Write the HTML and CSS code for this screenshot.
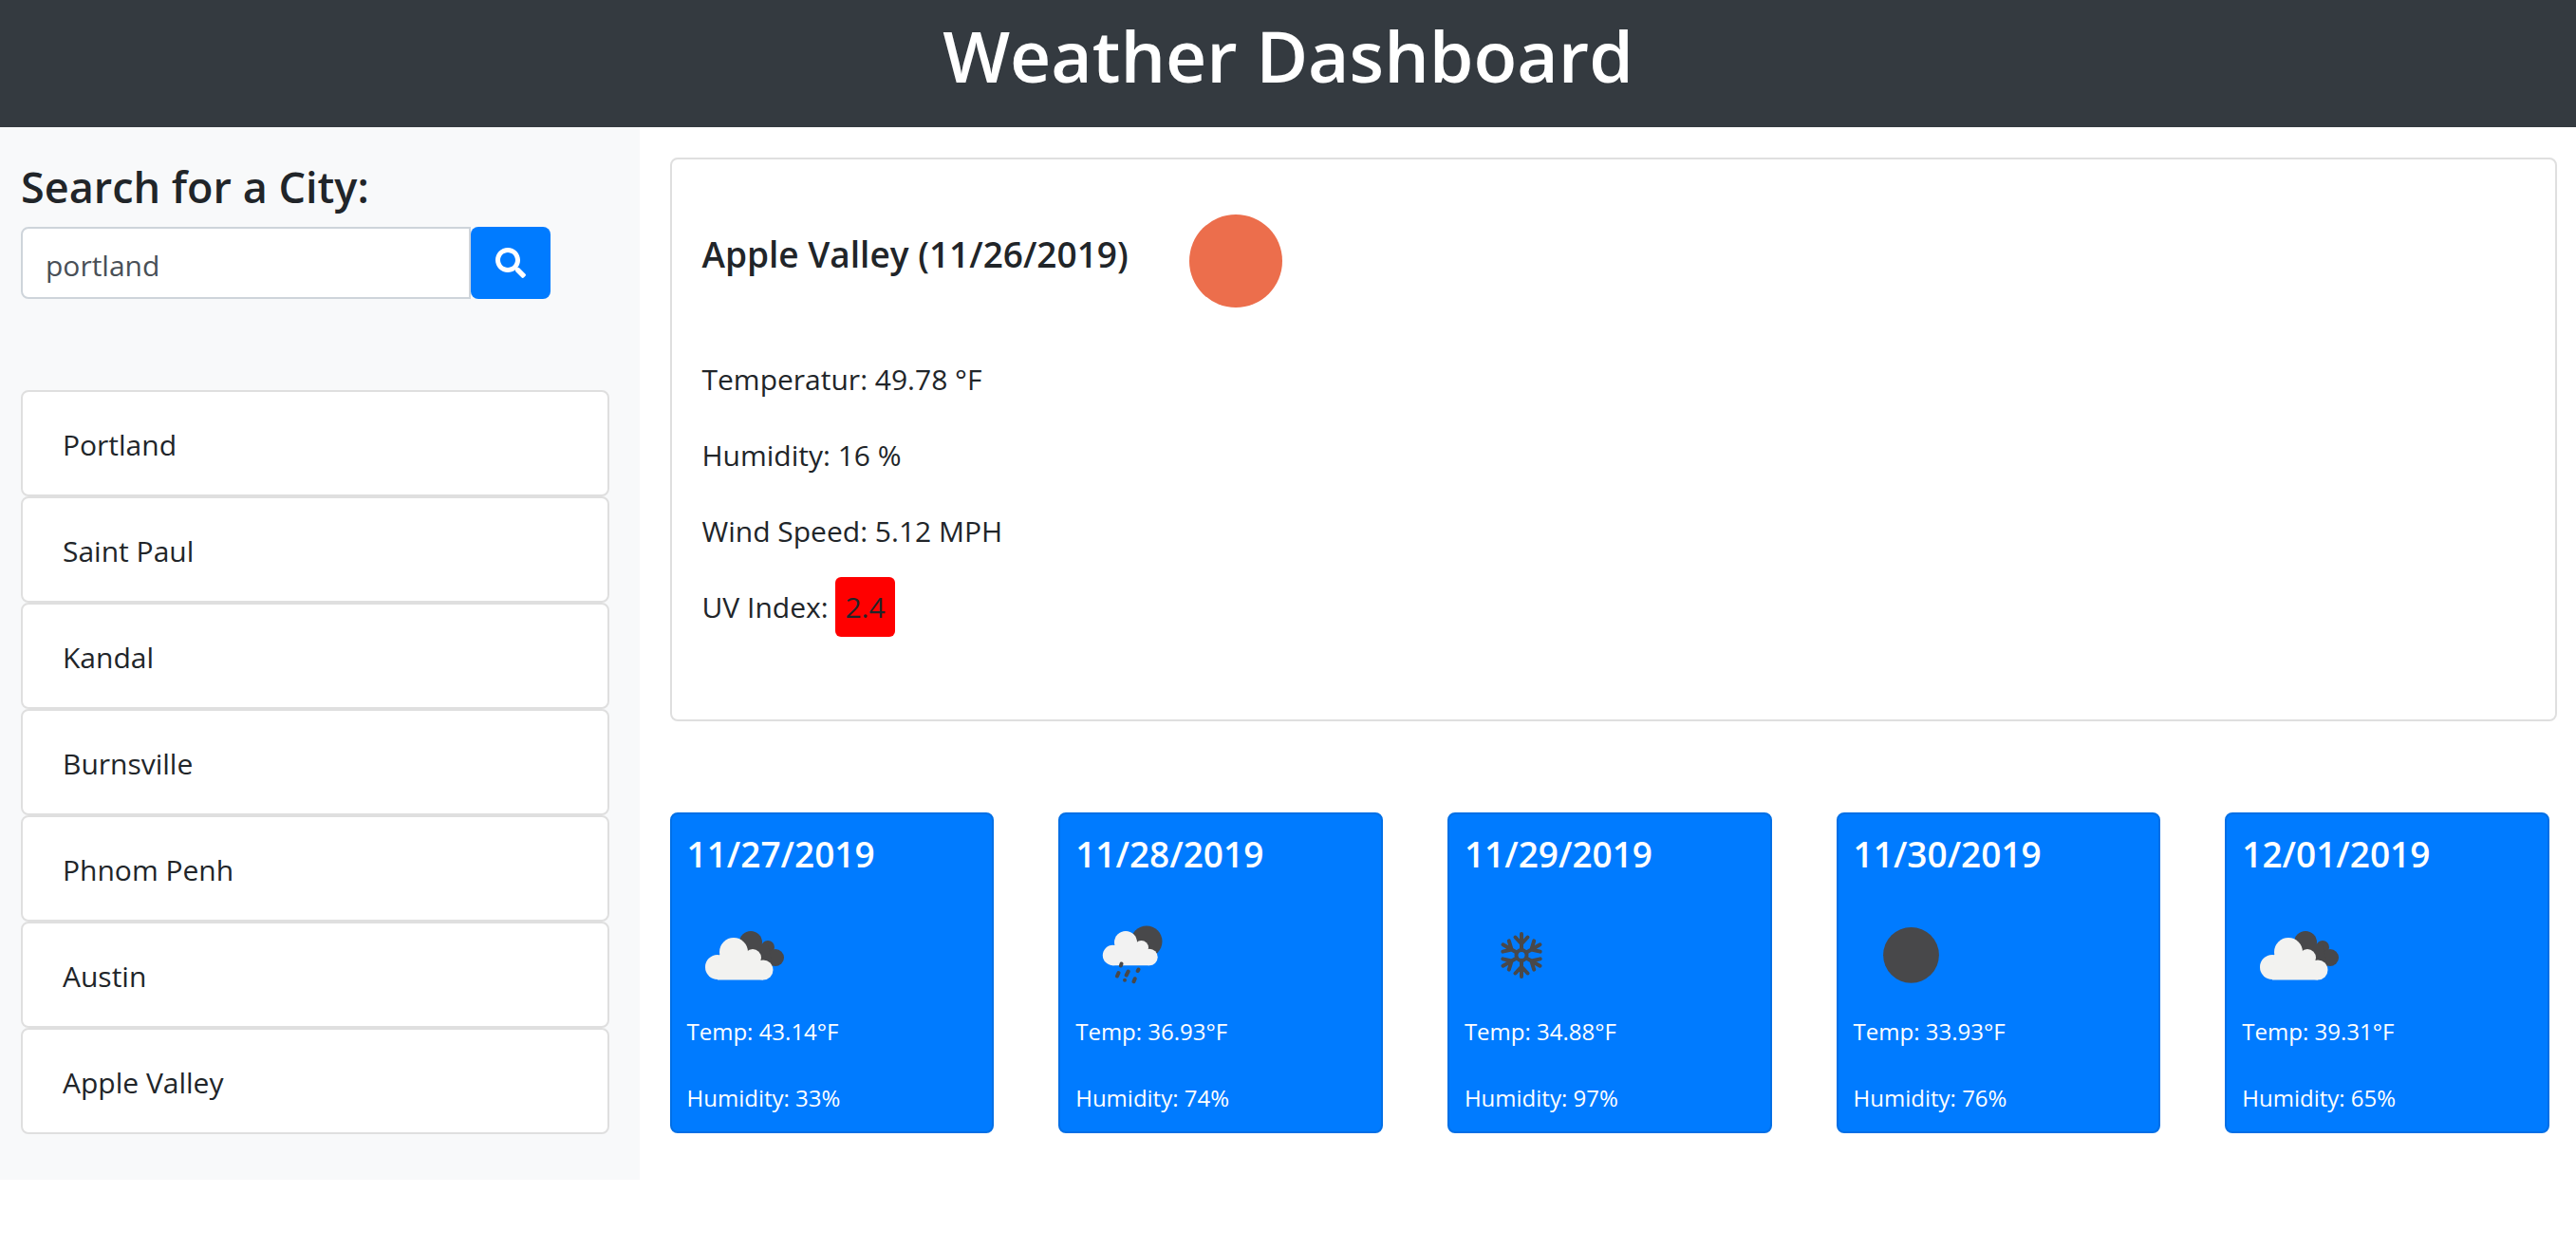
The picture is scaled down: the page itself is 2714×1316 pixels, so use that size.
FILE: index.html
```html
<!DOCTYPE html>
<html lang="en">
<head>
<meta charset="utf-8">
<meta name="viewport" content="width=device-width, initial-scale=1">
<title>Weather Dashboard</title>
<link rel="stylesheet" href="styles.css">
</head>
<body>
<header class="page-header">
  <h1 class="page-title">Weather Dashboard</h1>
</header>
<div class="layout">
  <aside class="sidebar">
    <form class="search">
      <label class="search-label" for="city">Search for a City:</label>
      <div class="search-row">
        <input class="search-input" id="city" type="text" value="portland">
        <button class="search-button" type="button" aria-label="Search">
          <svg class="search-icon" viewBox="0 0 512 512" aria-hidden="true"><path fill="currentColor" d="M505 442.7L405.3 343c-4.500-4.500-10.600-7-17-7H372c27.600-35.300 44-79.700 44-128C416 93.100 322.900 0 208 0S0 93.100 0 208s93.100 208 208 208c48.300 0 92.700-16.400 128-44v16.300c0 6.400 2.500 12.500 7 17l99.700 99.700c9.400 9.400 24.600 9.400 33.900 0l28.300-28.300c9.400-9.400 9.400-24.600.1-34zM208 336c-70.700 0-128-57.200-128-128 0-70.700 57.200-128 128-128 70.700 0 128 57.200 128 128 0 70.700-57.200 128-128 128z"/></svg>
        </button>
      </div>
    </form>
    <ul class="city-list">
      <li class="city">Portland</li>
      <li class="city">Saint Paul</li>
      <li class="city">Kandal</li>
      <li class="city">Burnsville</li>
      <li class="city">Phnom Penh</li>
      <li class="city">Austin</li>
      <li class="city">Apple Valley</li>
    </ul>
  </aside>
  <main class="content">
    <section class="current">
      <div class="current-head">
        <h2 class="current-title">Apple Valley (11/26/2019)</h2>
        <svg class="current-icon" viewBox="0 0 98 98" role="img" aria-label="Clear sky"><circle cx="49" cy="49" r="49" fill="#ec6e4c"/></svg>
      </div>
      <p class="reading">Temperatur: 49.78 °F</p>
      <p class="reading">Humidity: 16 %</p>
      <p class="reading">Wind Speed: 5.12 MPH</p>
      <p class="reading">UV Index: <span class="uv">2.4</span></p>
    </section>
    <section class="forecast">
      <article class="day">
        <h3 class="day-date">11/27/2019</h3>
        <svg class="day-icon" viewBox="0 0 110 100" role="img" aria-label="Broken clouds">
          <g fill="#48484a"><circle cx="67" cy="33" r="12"/><circle cx="85" cy="38" r="7"/><circle cx="93" cy="49" r="9"/><path d="M60 35L85 35L90 58H70z"/></g>
          <g fill="#f2f2f0"><circle cx="49" cy="43" r="15"/><circle cx="32" cy="59" r="13"/><circle cx="69" cy="49" r="9"/><circle cx="80" cy="62" r="10.500"/><path d="M34 46H74V54L80 60V72.500H32z"/></g>
        </svg>
        <p class="day-line">Temp: 43.14°F</p>
        <p class="day-line">Humidity: 33%</p>
      </article>
      <article class="day">
        <h3 class="day-date">11/28/2019</h3>
        <svg class="day-icon" viewBox="0 0 110 100" role="img" aria-label="Rain">
          <circle cx="75" cy="32" r="16.500" fill="#48484a"/>
          <g fill="#f2f2f2"><circle cx="53" cy="33" r="12"/><circle cx="39.500" cy="46.500" r="10.700"/><circle cx="69.500" cy="38.500" r="7.500"/><circle cx="78" cy="48.500" r="8.700"/><path d="M41 36H74V42L78 46V57.200H39z"/></g>
          <g stroke="#48484a" stroke-width="4" stroke-linecap="round"><path d="M48.500 55.500l-.6 2M45.500 65l-1.500 3.500M55.700 63.500l-2 4M66.500 61.500l-.8 1.500M52 72.700v.1M62.700 71.200l-1.200 3"/></g>
        </svg>
        <p class="day-line">Temp: 36.93°F</p>
        <p class="day-line">Humidity: 74%</p>
      </article>
      <article class="day">
        <h3 class="day-date">11/29/2019</h3>
        <svg class="day-icon" viewBox="0 0 110 100" role="img" aria-label="Snow">
          <defs><path id="arm" d="M0-6V-22.500M0-12L-6.500-19M0-12L6.500-19"/></defs>
          <g transform="translate(60 46.500)" fill="none" stroke="#48484a" stroke-width="4" stroke-linecap="round">
            <circle r="5.500"/>
            <use href="#arm"/><use href="#arm" transform="rotate(60)"/><use href="#arm" transform="rotate(120)"/><use href="#arm" transform="rotate(180)"/><use href="#arm" transform="rotate(240)"/><use href="#arm" transform="rotate(300)"/>
          </g>
        </svg>
        <p class="day-line">Temp: 34.88°F</p>
        <p class="day-line">Humidity: 97%</p>
      </article>
      <article class="day">
        <h3 class="day-date">11/30/2019</h3>
        <svg class="day-icon" viewBox="0 0 110 100" role="img" aria-label="Clear night"><circle cx="60.500" cy="46.300" r="29.400" fill="#48484a"/></svg>
        <p class="day-line">Temp: 33.93°F</p>
        <p class="day-line">Humidity: 76%</p>
      </article>
      <article class="day">
        <h3 class="day-date">12/01/2019</h3>
        <svg class="day-icon" viewBox="0 0 110 100" role="img" aria-label="Broken clouds">
          <g fill="#48484a"><circle cx="67" cy="33" r="12"/><circle cx="85" cy="38" r="7"/><circle cx="93" cy="49" r="9"/><path d="M60 35L85 35L90 58H70z"/></g>
          <g fill="#f2f2f0"><circle cx="49" cy="43" r="15"/><circle cx="32" cy="59" r="13"/><circle cx="69" cy="49" r="9"/><circle cx="80" cy="62" r="10.500"/><path d="M34 46H74V54L80 60V72.500H32z"/></g>
        </svg>
        <p class="day-line">Temp: 39.31°F</p>
        <p class="day-line">Humidity: 65%</p>
      </article>
    </section>
  </main>
</div>
</body>
</html>
```
FILE: styles.css
```css
*,
*::before,
*::after {
  box-sizing: border-box;
}

body {
  margin: 0;
  background: #fff;
  color: #212529;
  font-family: "Segoe UI", "Open Sans", "Noto Sans", sans-serif;
  font-size: 30px;
  line-height: 48px;
}

h1,
h2,
h3,
p,
ul {
  margin: 0;
  padding: 0;
}

.page-header {
  padding: 10px 0 28px;
  background: #343a40;
  color: #fff;
  text-align: center;
}

.page-title {
  font-size: 75px;
  font-weight: 600;
  line-height: 96px;
}

.layout {
  display: flex;
  align-items: flex-start;
  padding-right: 20px;
}

.sidebar {
  flex: 0 0 25%;
  padding: 34px 32px 48px 22px;
  background: #f8f9fa;
}

.search {
  margin-bottom: 96px;
}

.search-label {
  display: block;
  margin-bottom: 14px;
  font-size: 45px;
  font-weight: 600;
  line-height: 57px;
}

.search-row {
  display: flex;
  width: 90%;
}

.search-input {
  flex: 1;
  min-width: 0;
  height: 76px;
  padding: 4px 24px 0;
  border: 2px solid #ced4da;
  border-radius: 8px 0 0 8px;
  background: #fff;
  color: #495057;
  font: inherit;
}

.search-button {
  display: flex;
  align-items: center;
  justify-content: center;
  width: 84px;
  padding: 0;
  border: 0;
  border-radius: 8px;
  background: #007bff;
  color: #fff;
}

.search-icon {
  width: 32px;
  height: 32px;
}

.city-list {
  list-style: none;
}

.city {
  padding: 32px 42px 28px;
  border: 2px solid #dfdfdf;
  border-radius: 8px;
  background: #fff;
}

.content {
  flex: 1;
  min-width: 0;
  padding: 32px 0 48px 32px;
}

.current {
  padding: 58px 32px 94px;
  border: 2px solid #dfdfdf;
  border-radius: 8px;
}

.current-head {
  display: flex;
  align-items: flex-start;
  gap: 64px;
  margin-bottom: 52px;
}

.current-title {
  padding-top: 18px;
  font-size: 37px;
  font-weight: 600;
}

.current-icon {
  width: 98px;
  height: 98px;
}

.reading + .reading {
  margin-top: 32px;
}

.uv {
  padding: 11px 10px;
  border-radius: 6px;
  background: #f00;
}

.forecast {
  display: grid;
  grid-template-columns: repeat(5, 1fr);
  column-gap: 68px;
  margin-top: 96px;
  padding-right: 8px;
}

.day {
  padding: 18px 16px 16px;
  border: 2px solid #006fe6;
  border-radius: 8px;
  background: #007bff;
  color: #fff;
}

.day-date {
  font-size: 37px;
  font-weight: 600;
}

.day-icon {
  display: block;
  width: 110px;
  height: 100px;
  margin: 36px 0 8px;
}

.day-line {
  font-size: 24px;
  line-height: 38px;
}

.day-line + .day-line {
  margin-top: 32px;
}
```
